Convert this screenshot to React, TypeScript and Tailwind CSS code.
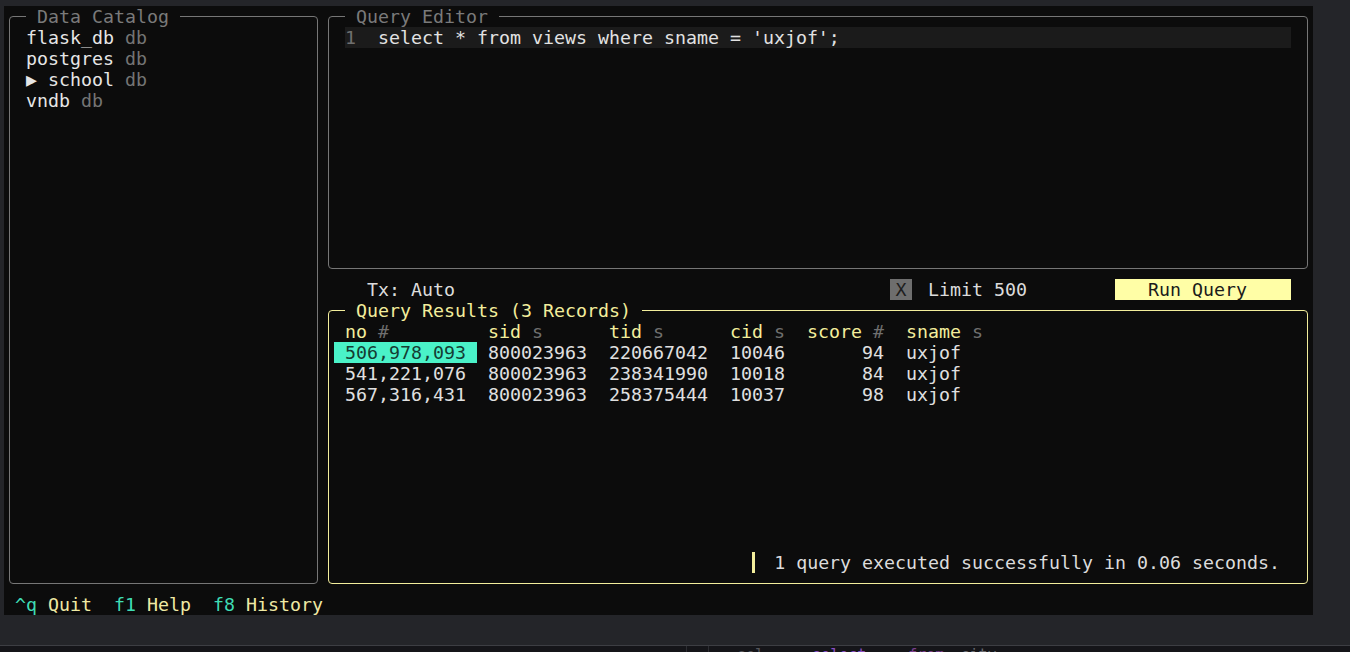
import type { ReactNode } from "react";

const rows = [
  ["506,978,093", "800023963", "220667042", "10046", "94", "uxjof"],
  ["541,221,076", "800023963", "238341990", "10018", "84", "uxjof"],
  ["567,316,431", "800023963", "258375444", "10037", "98", "uxjof"],
];

const cols = [
  { name: "no", type: "#", w: "w-[143px]", right: false },
  { name: "sid", type: "s", w: "w-[121px]", right: false },
  { name: "tid", type: "s", w: "w-[121px]", right: false },
  { name: "cid", type: "s", w: "w-[77px]", right: false },
  { name: "score", type: "#", w: "w-[99px]", right: true },
  { name: "sname", type: "s", w: "w-[99px]", right: false },
];

function Panel({
  title,
  active,
  children,
}: {
  title: string;
  active?: boolean;
  children: ReactNode;
}) {
  return (
    <div
      className={`relative h-full rounded-[4px] border ${
        active ? "border-[#f3ee9c]" : "border-[#767676]"
      }`}
    >
      <span
        className={`absolute -top-[11px] left-[16px] h-[21px] bg-[#0c0c0c] whitespace-pre ${
          active ? "text-[#f3ee9c]" : "text-[#7a7a7a]"
        }`}
      >
        {` ${title} `}
      </span>
      {children}
    </div>
  );
}

function CatalogItem({ name, arrow }: { name: string; arrow?: boolean }) {
  return (
    <div className="h-[21px] whitespace-pre">
      {arrow && <span className="text-[#e6e6e6]">▶ </span>}
      <span className="text-[#e6e6e6]">{name}</span>
      <span className="text-[#747474]"> db</span>
    </div>
  );
}

function DataCatalog() {
  return (
    <div className="w-[319px] px-[5px] py-[10px]">
      <Panel title="Data Catalog">
        <div className="pl-[16px] pt-[10px]">
          <CatalogItem name="flask_db" />
          <CatalogItem name="postgres" />
          <CatalogItem name="school" arrow />
          <CatalogItem name="vndb" />
        </div>
      </Panel>
    </div>
  );
}

function Editor() {
  return (
    <div className="h-[273px] px-[5px] py-[10px]">
      <Panel title="Query Editor">
        <div className="px-[16px] pt-[10px]">
          <div className="flex h-[21px] bg-[#1b1b1b] whitespace-pre">
            <span className="w-[33px] text-[#6f6f6f]">1</span>
            <span className="text-[#e2e2e2]">select * from views where sname = 'uxjof';</span>
          </div>
        </div>
      </Panel>
    </div>
  );
}

function Toolbar() {
  return (
    <div className="flex h-[21px] items-stretch whitespace-pre">
      <span className="ml-[44px] text-[#dcdcdc]">Tx: Auto</span>
      <span className="ml-[435px] flex w-[22px] items-center justify-center bg-[#6e6e6e] text-[#1e1e1e]">
        X
      </span>
      <span className="ml-[16px] text-[#dcdcdc]">Limit 500</span>
      <span className="ml-[88px] flex w-[176px] items-center bg-[#fffea6] pl-[33px] text-[#1a1a1a]">
        Run Query
      </span>
    </div>
  );
}

function Results() {
  return (
    <div className="h-[294px] px-[5px] py-[10px]">
      <Panel title="Query Results (3 Records)" active>
        <div className="flex h-full flex-col pb-[10px] pl-[5px] pt-[10px]">
          <div className="flex h-[21px] whitespace-pre">
            {cols.map((c) => (
              <span
                key={c.name}
                className={`${c.w} px-[11px] ${c.right ? "text-right" : ""}`}
              >
                <span className="text-[#f3ee9c]">{c.name}</span>
                <span className="text-[#6f6f6f]"> {c.type}</span>
              </span>
            ))}
          </div>
          {rows.map((r, i) => (
            <div key={i} className="flex h-[21px] whitespace-pre text-[#e0e0e0]">
              {r.map((v, j) => (
                <span
                  key={j}
                  className={`${cols[j].w} px-[11px] ${cols[j].right ? "text-right" : ""} ${
                    i === 0 && j === 0 ? "bg-[#4af2c8] text-[#143d33]" : ""
                  }`}
                >
                  {v}
                </span>
              ))}
            </div>
          ))}
          <div className="mt-auto flex h-[21px] justify-end pr-[27px]">
            <span className="border-l-[3px] border-[#f3ee9c] pl-[19px] whitespace-pre text-[#dcdcdc]">
              1 query executed successfully in 0.06 seconds.
            </span>
          </div>
        </div>
      </Panel>
    </div>
  );
}

function Footer() {
  return (
    <div className="h-[21px] whitespace-pre">
      <span> </span>
      <span className="text-[#3fdcb4]">^q</span>
      <span className="text-[#efe9a4]"> Quit  </span>
      <span className="text-[#3fdcb4]">f1</span>
      <span className="text-[#efe9a4]"> Help  </span>
      <span className="text-[#3fdcb4]">f8</span>
      <span className="text-[#efe9a4]"> History</span>
    </div>
  );
}

export default function App() {
  return (
    <div className="flex h-[652px] w-[1350px] flex-col overflow-hidden bg-[#242529]">
      <div className="pl-[4px] pt-[6px]">
        <div className="flex h-[609px] w-[1309px] flex-col bg-[#0c0c0c] font-['DejaVu_Sans_Mono','Liberation_Mono',monospace] text-[18.27px] leading-[21px] text-[#dedede]">
          <div className="flex h-[588px]">
            <DataCatalog />
            <div className="flex w-[990px] flex-col">
              <Editor />
              <Toolbar />
              <Results />
            </div>
          </div>
          <Footer />
        </div>
      </div>
      <div className="h-[30px]" />
      <div className="h-px bg-[#3d3e43]" />
      {/* editor behind the terminal, only the tops of its glyphs peek out */}
      <div className="flex flex-1 overflow-hidden bg-[#151519] font-['DejaVu_Sans_Mono',monospace] text-[15px] leading-[15px] whitespace-pre">
        <span className="ml-[686px] h-[6px] w-px bg-[#2c2d32]" />
        <span className="ml-[21px] h-[6px] w-px bg-[#2c2d32]" />
        <div className="flex pt-[2px]">
          <span className="ml-[28px] text-[#55565c]">sel</span>
          <span className="ml-[48px] text-[#8b4fc4]">select</span>
          <span className="ml-[42px] text-[#7a3f8e]">from</span>
          <span className="ml-[16px] text-[#6a6b72]">city</span>
        </div>
      </div>
    </div>
  );
}
